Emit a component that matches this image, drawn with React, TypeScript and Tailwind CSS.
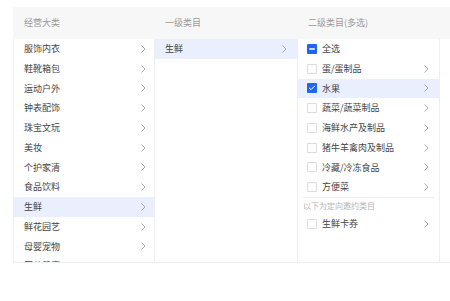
import { Check, Minus } from 'lucide-react';

const level1 = ['服饰内衣', '鞋靴箱包', '运动户外', '钟表配饰', '珠宝文玩', '美妆', '个护家清', '食品饮料', '生鲜', '鲜花园艺', '母婴宠物', '医药健康'];

const level3 = [
  { name: '蛋/蛋制品', checked: false },
  { name: '水果', checked: true },
  { name: '蔬菜/蔬菜制品', checked: false },
  { name: '海鲜水产及制品', checked: false },
  { name: '猪牛羊禽肉及制品', checked: false },
  { name: '冷藏/冷冻食品', checked: false },
  { name: '方便菜', checked: false },
];

const Chevron = () => (
  <svg width="5" height="8" viewBox="0 0 5 8" fill="none" className="shrink-0">
    <polyline points="0.5,0.5 4,4 0.5,7.5" stroke="#a0a0a0" strokeWidth="0.9" />
  </svg>
);

const Box = ({ state }: { state: 'none' | 'checked' | 'half' }) => {
  if (state === 'none') {
    return <span className="w-[10px] h-[10px] shrink-0 border border-[#dcdcdc] bg-white rounded-[1px]" />;
  }
  return (
    <span className="w-[10px] h-[10px] shrink-0 bg-[#2266f0] rounded-[1px] flex items-center justify-center">
      {state === 'checked' ? <Check size={8} color="white" strokeWidth={3} /> : <Minus size={8} color="white" strokeWidth={4} />}
    </span>
  );
};

export default function App() {
  return (
    <div className="w-[450px] h-[301px] bg-white overflow-hidden pl-[13px] pt-[7px] text-[9px] text-[#444]" style={{ fontFamily: '"Noto Sans CJK SC", "Noto Sans", sans-serif' }}>
      <div className="w-[437px] flex flex-col">
        <div className="h-[32px] bg-[#f7f7f8] flex items-center text-[#9a9a9a]">
          <div className="w-[142px] pl-[11px]">经营大类</div>
          <div className="w-[143px] pl-[10px]">一级类目</div>
          <div className="w-[142px] pl-[10px]">二级类目(多选)</div>
        </div>
        <div className="h-[224px] flex border-b border-[#eeeeee]">
          <div className="w-[142px] border-l border-r border-[#efefef] overflow-hidden">
            {level1.map((c) => (
              <div key={c} className={`h-[19.75px] flex items-center justify-between pl-[10px] pr-[8px] ${c === '生鲜' ? 'bg-[#e9effd]' : ''}`}>
                <span>{c}</span>
                <Chevron />
              </div>
            ))}
          </div>
          <div className="w-[143px] border-r border-[#efefef]">
            <div className="h-5 flex items-center justify-between pl-[10px] pr-[10px] bg-[#e9effd]">
              <span>生鲜</span>
              <Chevron />
            </div>
          </div>
          <div className="w-[142px] border-r border-[#efefef] flex flex-col">
            <div className="h-[19.75px] flex items-center gap-[5px] pl-[9px] pr-[10px]">
              <Box state="half" />
              <span>全选</span>
            </div>
            {level3.map((c) => (
              <div key={c.name} className={`h-[19.75px] flex items-center gap-[5px] pl-[9px] pr-[10px] ${c.checked ? 'bg-[#e9effd]' : ''}`}>
                <Box state={c.checked ? 'checked' : 'none'} />
                <span className="flex-1">{c.name}</span>
                <Chevron />
              </div>
            ))}
            <div className="mx-[5px] border-t border-[#eeeeee] h-[17px] flex items-center text-[8px] text-[#b5b5b5]">以下为定向邀约类目</div>
            <div className="h-5 flex items-center gap-[5px] pl-[9px] pr-[10px]">
              <Box state="none" />
              <span className="flex-1">生鲜卡券</span>
              <Chevron />
            </div>
          </div>
        </div>
      </div>
    </div>
  );
}
